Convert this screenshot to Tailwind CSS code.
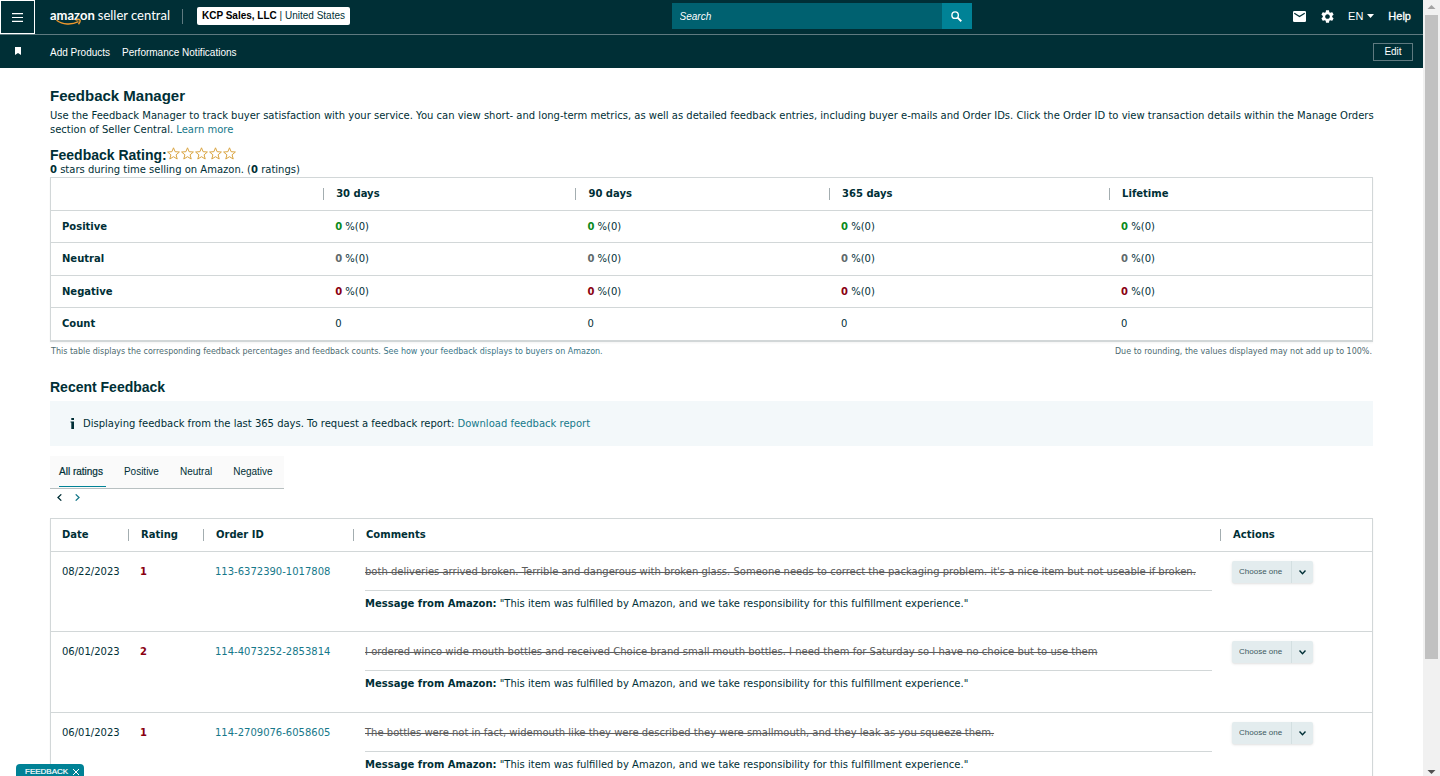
<!DOCTYPE html>
<html lang="en">

<head>
  <meta charset="UTF-8" />
  <meta name="viewport" content="width=device-width, initial-scale=1.0" />
  <script src="https://cdn.jsdelivr.net/npm/@tailwindcss/browser@4"></script>
  <title>Feedback Manager</title>
</head>

<body class="flex h-screen overflow-hidden bg-white font-['DejaVu_Sans',sans-serif] text-[10px] leading-[14px] text-[#002f36]">
  <div class="flex-1 min-w-0 overflow-hidden">
    <header class="bg-[#002f36] text-white font-['Liberation_Sans',sans-serif]">
      <div class="flex items-start h-[35px] border-b border-[#5f7a80]">
        <button aria-label="Menu" class="flex items-center justify-center w-[35px] h-[34px] shrink-0 border border-white">
          <svg class="w-[11px] h-[9px]" viewBox="0 0 11 9" fill="#fff"><path d="M0 0h11v1.200H0zM0 3.900h11v1.200H0zM0 7.800h11V9H0z" /></svg>
        </button>
        <a href="#" class="relative ml-[15px] mt-[5px] h-5 flex items-center gap-[3px] text-[13px] leading-5 font-['Lato',sans-serif]">
          <span class="font-bold">amazon</span>
          <span>seller central</span>
          <svg class="absolute left-[6px] top-[14px] w-[26px] h-[7px]" viewBox="0 0 26 7" fill="none" stroke="#f0982d" stroke-width="1.4"><path d="M0.5 1.2c6 4.6 15 5 22 1.4M19.5 1.2c2-.7 4-.8 4.600 0 .3.800-.5 2.600-1.600 4" /></svg>
        </a>
        <span class="w-px h-[15px] mt-[9px] ml-3 bg-[#5f7a80]"></span>
        <button class="h-[18px] mt-[7px] ml-[14px] px-[5px] bg-white rounded-xs text-[10px] text-[#002f36] whitespace-nowrap"><b class="text-black">KCP Sales, LLC</b> | United States</button>
        <form class="flex h-[26px] w-[300px] mt-[3px] mx-auto">
          <input aria-label="Search" placeholder="Search" class="flex-1 min-w-0 px-2 pt-px bg-[#006170] text-[10px] italic placeholder:text-white" />
          <button type="button" aria-label="Submit search" class="flex items-center justify-center w-[30px] bg-[#008296]">
            <svg class="w-[11px] h-[11px]" viewBox="0 0 12 12" fill="none" stroke="#fff" stroke-width="1.5"><circle cx="4.500" cy="4.500" r="3.500" /><path d="M7.200 7.200l4 4" stroke-width="2" /></svg>
          </button>
        </form>
        <nav class="flex items-center h-8 pr-3 text-[11px]">
          <a href="#" aria-label="Messages"><svg class="w-[13px] h-[11px]" viewBox="0 0 13 11"><rect width="13" height="11" rx="1.300" fill="#fff" /><path d="M1.300 2.200l5.200 3.400 5.200-3.400" fill="none" stroke="#002f36" stroke-width="1.200" /></svg></a>
          <a href="#" aria-label="Settings" class="ml-[15px]"><svg class="w-[13px] h-[13px]" viewBox="2 2 20 20" fill="#fff"><path d="M19.140 12.940c.04-.3.060-.61.060-.94s-.02-.64-.07-.94l2.030-1.580c.18-.14.23-.41.120-.61l-1.920-3.320c-.12-.22-.37-.29-.59-.22l-2.390.96c-.5-.38-1.030-.7-1.620-.94l-.36-2.540c-.04-.24-.24-.41-.48-.41h-3.840c-.24 0-.43.170-.47.410l-.36 2.540c-.59.240-1.130.570-1.620.940l-2.390-.96c-.22-.08-.47 0-.59.220L2.740 8.870c-.12.210-.08.470.120.610l2.030 1.580c-.05.300-.09.630-.09.940s.02.640.070.940l-2.030 1.580c-.18.140-.23.410-.12.610l1.920 3.320c.12.220.37.290.59.220l2.390-.96c.5.380 1.030.7 1.620.940l.36 2.540c.05.240.24.410.48.410h3.840c.24 0 .44-.17.470-.41l.36-2.540c.59-.24 1.130-.56 1.620-.94l2.390.96c.22.080.47 0 .59-.22l1.920-3.320c.12-.22.070-.47-.12-.61l-2.010-1.580zM12 15.600c-1.980 0-3.600-1.620-3.600-3.600s1.620-3.600 3.600-3.600 3.600 1.620 3.600 3.600-1.620 3.600-3.600 3.600z" /></svg></a>
          <button class="flex items-center gap-1 ml-[14px]">EN <svg class="w-[7px] h-1" viewBox="0 0 7 4" fill="#fff"><path d="M0 0h7L3.500 4z" /></svg></button>
          <a href="#" class="ml-[14px] [-webkit-text-stroke:0.3px]">Help</a>
        </nav>
      </div>
      <div class="flex items-center h-[33px] pt-px text-[10px]">
        <svg class="w-[6px] h-2 ml-[15px] mb-[3px]" viewBox="0 0 6 8" fill="#fff"><path d="M0 0h6v8L3 6 0 8z" /></svg>
        <a href="#" class="ml-[29px] pt-px">Add Products</a>
        <a href="#" class="ml-3 pt-px">Performance Notifications</a>
        <button class="w-10 h-[18px] ml-auto mr-[10px] border border-[#5f7a80] text-[10px] leading-4">Edit</button>
      </div>
    </header>

    <main class="px-[50px] pt-5">
      <h1 class="font-['Liberation_Sans',sans-serif] text-[15px] leading-4 font-bold">Feedback Manager</h1>
      <p class="mt-[5px] whitespace-nowrap">Use the Feedback Manager to track buyer satisfaction with your service. You can view short- and long-term metrics, as well as detailed feedback entries, including buyer e-mails and Order IDs. Click the Order ID to view transaction details within the Manage Orders<br>section of Seller Central. <a href="#" class="text-[#16788a]">Learn more</a></p>
      <div class="flex items-start mt-[10px]">
        <h2 class="font-['Liberation_Sans',sans-serif] text-[14px] leading-4 font-bold">Feedback Rating:</h2>
        <div id="stars" class="flex gap-px"></div>
      </div>
      <p>
        <b>0</b> stars during time selling on Amazon. (<b>0</b> ratings)
      </p>

      <table class="w-full table-fixed border-separate border-spacing-0 border border-b-2 border-[#d2d7d8] text-left shadow-xs">
        <thead>
          <tr class="h-8">
            <td class="w-[20.6%]"></td>
            <th class="w-[19.1%]"><span class="block border-l border-[#a3adb0] pl-3 leading-3">30 days</span></th>
            <th class="w-[19.2%]"><span class="block border-l border-[#a3adb0] pl-3 leading-3">90 days</span></th>
            <th class="w-[21.2%]"><span class="block border-l border-[#a3adb0] pl-3 leading-3">365 days</span></th>
            <th><span class="block border-l border-[#a3adb0] pl-3 leading-3">Lifetime</span></th>
          </tr>
        </thead>
        <tbody id="summary-rows"></tbody>
      </table>
      <div class="flex justify-between mt-[3px] px-px text-[8px] text-[#4d6a70]">
        <p>This table displays the corresponding feedback percentages and feedback counts. <a href="#" class="text-[#3a7586]">See how your feedback displays to buyers on Amazon.</a></p>
        <p>Due to rounding, the values displayed may not add up to 100%.</p>
      </div>

      <h2 class="mt-5 font-['Liberation_Sans',sans-serif] text-[14px] leading-4 font-bold">Recent Feedback</h2>
      <div class="flex items-center h-[45px] mt-[6px] px-5 bg-[#f3f8fa]">
        <svg class="w-[5px] h-[11px] mr-2" viewBox="0 0 5 11" fill="#002f36"><path d="M1.300 0h2.700v2H1.300zM0.500 3.500H4V11H1.300V4.500H.5z" /></svg>
        <p>Displaying feedback from the last 365 days. To request a feedback report: <a href="#" class="text-[#16788a]">Download feedback report</a></p>
      </div>

      <nav class="flex w-[234px] h-[33px] mt-[10px] px-[9px] gap-[18px] bg-[#fafafa] border-b border-[#b8c0c1] font-['Liberation_Sans',sans-serif] leading-8">
        <a href="#" class="h-[31px] pr-[3px] border-b border-[#008296] [-webkit-text-stroke:0.2px]">All ratings</a>
        <a href="#">Positive</a>
        <a href="#" class="ml-[3px]">Neutral</a>
        <a href="#" class="ml-[3px]">Negative</a>
      </nav>
      <div class="flex gap-[13px] pt-[5px] pl-[7px]">
        <button aria-label="Previous page"><svg class="w-[5px] h-[7px]" viewBox="0 0 5 7" fill="none" stroke="#002f36" stroke-width="1.300"><path d="M4.300.4L1 3.500l3.300 3.100" /></svg></button>
        <button aria-label="Next page"><svg class="w-[5px] h-[7px]" viewBox="0 0 5 7" fill="none" stroke="#16788a" stroke-width="1.300"><path d="M.7.4L4 3.500.7 6.600" /></svg></button>
      </div>

      <table class="w-full mt-[17px] table-fixed border-separate border-spacing-0 border border-[#d2d7d8] text-left shadow-xs">
        <thead>
          <tr class="h-8">
            <th class="w-[77px] pl-[11px]">Date</th>
            <th class="w-[75px]"><span class="block border-l border-[#a3adb0] pl-3 leading-3">Rating</span></th>
            <th class="w-[150px]"><span class="block border-l border-[#a3adb0] pl-3 leading-3">Order ID</span></th>
            <th><span class="block border-l border-[#a3adb0] pl-3 leading-3">Comments</span></th>
            <th class="w-[152px]"><span class="block border-l border-[#a3adb0] pl-3 leading-3">Actions</span></th>
          </tr>
        </thead>
        <tbody id="feedback-rows"></tbody>
      </table>
    </main>
  </div>

  <!-- scrollbar -->
  <div class="flex flex-col items-center w-[17px] shrink-0 bg-[#f1f1f1]">
    <svg class="w-[17px] h-[15px]" viewBox="0 0 17 15" fill="#a3a3a3"><path d="M4.500 9h8L8.500 5z" /></svg>
    <div class="w-[13px] h-[644px] bg-[#c1c1c1]"></div>
    <svg class="w-[17px] h-[15px] mt-auto" viewBox="0 0 17 15" fill="#505050"><path d="M4.500 9h8l-4 4z" /></svg>
  </div>

  <button class="fixed left-4 bottom-0 flex items-center h-3 pl-[9px] pr-[5px] pt-1 gap-[5px] rounded-t-sm bg-[#008296] text-white font-['Liberation_Sans',sans-serif] text-[8px] [-webkit-text-stroke:0.2px]">FEEDBACK
    <svg class="w-[6px] h-[6px]" viewBox="0 0 6 6" stroke="#fff"><path d="M0 0l6 6M6 0L0 6" /></svg>
  </button>

  <script>
    const summary = [
      { label: "Positive", color: "text-[#0a8a1c]" },
      { label: "Neutral", color: "text-[#5f6a6c]" },
      { label: "Negative", color: "text-[#8a0010]" },
      { label: "Count" }
    ];

    const feedback = [
      { date: "08/22/2023", rating: 1, order: "113-6372390-1017808", comment: "both deliveries arrived broken. Terrible and dangerous with broken glass. Someone needs to correct the packaging problem. it's a nice item but not useable if broken." },
      { date: "06/01/2023", rating: 2, order: "114-4073252-2853814", comment: "I ordered winco wide mouth bottles and received Choice brand small mouth bottles. I need them for Saturday so I have no choice but to use them" },
      { date: "06/01/2023", rating: 1, order: "114-2709076-6058605", comment: "The bottles were not in fact, widemouth like they were described they were smallmouth, and they leak as you squeeze them." }
    ];

    document.getElementById("stars").innerHTML = `
      <svg class="w-[13px] h-[13px]" viewBox="0 0 13 13" fill="none" stroke="#d9a441"><path d="M6.500.8l1.600 3.900 4.300.3-3.300 2.800 1.100 4.200-3.700-2.300-3.700 2.300 1.100-4.200L.6 5l4.300-.3z" /></svg>`.repeat(5);

    document.getElementById("summary-rows").innerHTML = summary.map((row) => `
      <tr class="h-8 even:h-[33px]">
        <th class="pl-[11px] border-t border-[#d2d7d8]">${row.label}</th>
        ${`<td class="pl-3 border-t border-[#d2d7d8]">${row.color ? `<b class="${row.color}">0</b> %(0)` : "0"}</td>`.repeat(4)}
      </tr>
    `).join("");

    document.getElementById("feedback-rows").innerHTML = feedback.map((item, index) => `
      <tr class="h-20 even:h-[81px] align-top">
        <td class="pl-[11px] pt-[13px] border-t border-[#d2d7d8]">${item.date}</td>
        <td class="pl-3 pt-[13px] border-t border-[#d2d7d8] font-bold text-[#8a0010]">${item.rating}</td>
        <td class="pl-3 pt-[13px] border-t border-[#d2d7d8]"><a href="#" class="text-[#16788a]">${item.order}</a></td>
        <td class="pl-3 pr-2 pt-[13px] border-t border-[#d2d7d8]">
          <p class="pb-[11px] border-b border-[#d2d7d8] line-through text-[#5c5c5c] whitespace-nowrap">${item.comment}</p>
          <p class="pt-[6px]"><b>Message from Amazon:</b> "This item was fulfilled by Amazon, and we take responsibility for this fulfillment experience."</p>
        </td>
        <td class="pl-3 pt-[9px] border-t border-[#d2d7d8]">
          <div class="relative w-[81px] h-[22px]">
            <select id="action-${index}" aria-label="Actions" class="w-full h-full pl-[7px] appearance-none rounded-xs bg-[#e3ecee] shadow-sm font-['Liberation_Sans',sans-serif] text-[8px] text-[#3d5a60]">
              <option>Choose one</option>
            </select>
            <span class="absolute right-0 top-0 flex items-center justify-center w-[22px] h-full border-l border-[#d3dfe1] pointer-events-none">
              <svg class="w-[7px] h-[5px]" viewBox="0 0 7 5" fill="none" stroke="#002f36" stroke-width="1.400"><path d="M.5.500l3 3.200 3-3.200" /></svg>
            </span>
          </div>
        </td>
      </tr>
    `).join("");
  </script>
</body>

</html>
